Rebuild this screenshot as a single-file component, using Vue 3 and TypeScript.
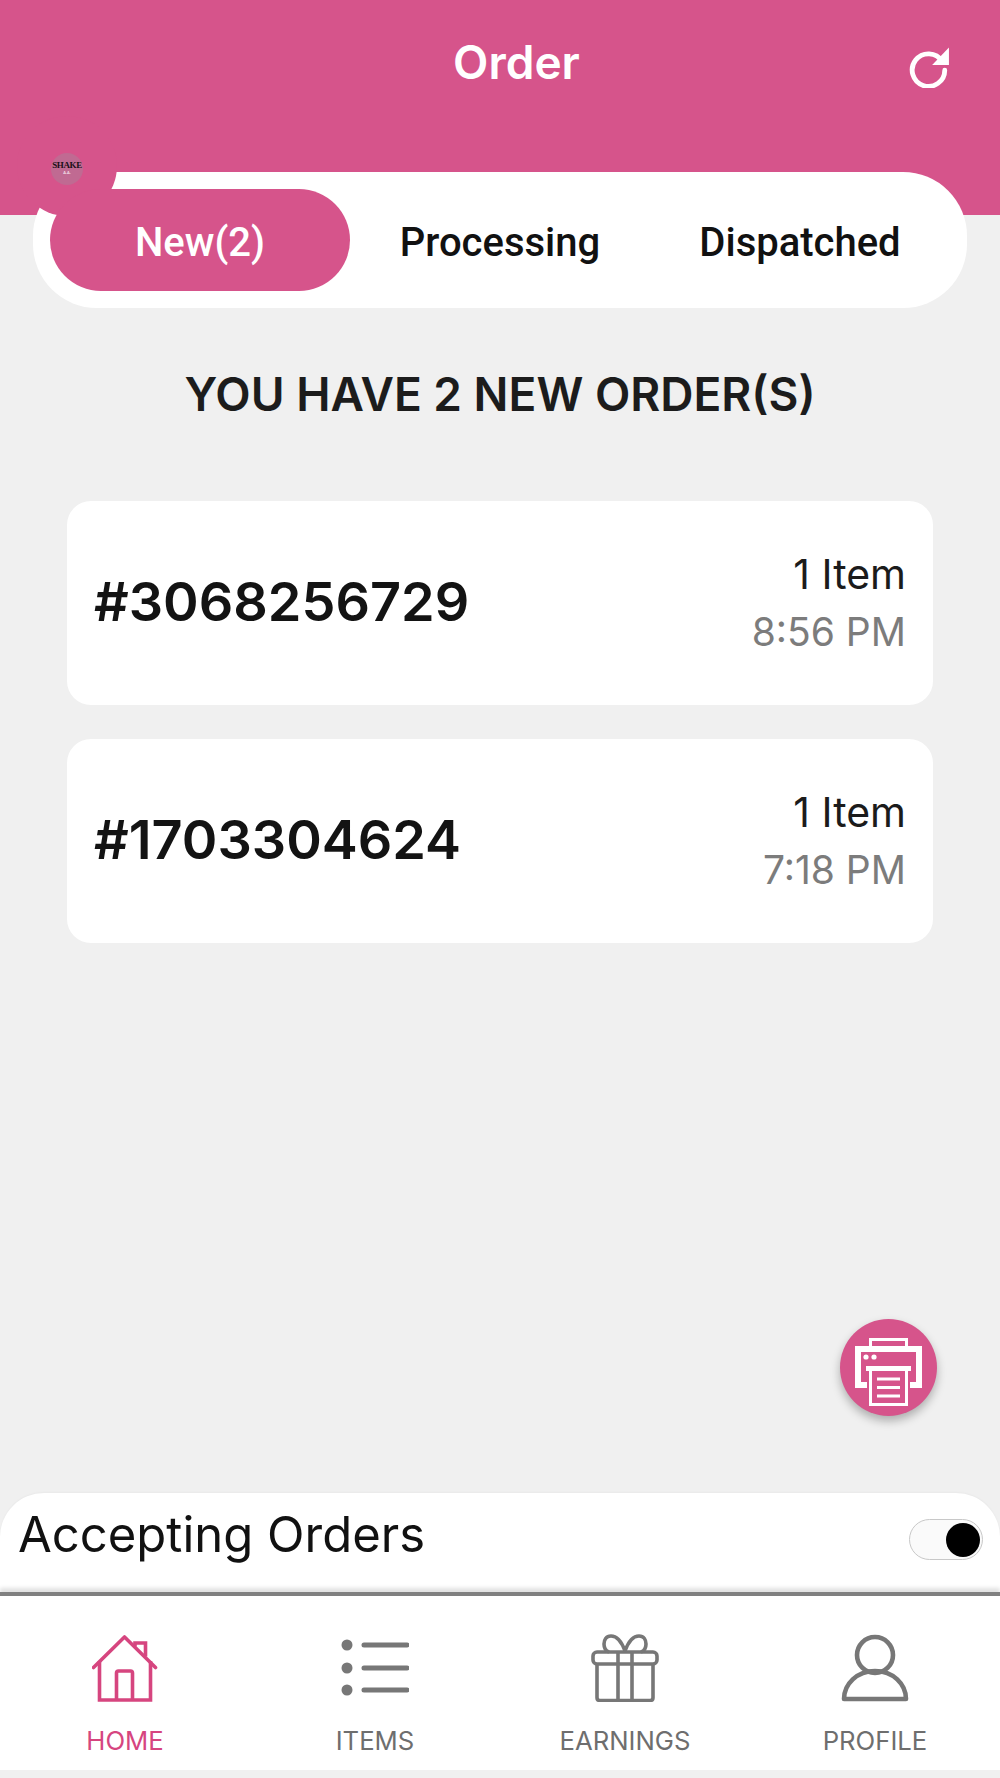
<script setup lang="ts">
const tabs = ['New(2)', 'Processing', 'Dispatched']
const orders = [
  { id: '#3068256729', items: '1 Item', time: '8:56 PM' },
  { id: '#1703304624', items: '1 Item', time: '7:18 PM' },
]
</script>

<template>
  <div class="page">
    <header class="header">
      <h1 class="title">Order</h1>
      <svg class="refresh" viewBox="0 0 40 40" fill="none">
        <path d="M32.5 14.5A15.5 15.5 0 1 0 35 23" stroke="#fff" stroke-width="4.6" stroke-linecap="round" />
        <path d="M39 1.500V18H23z" fill="#fff" />
      </svg>
    </header>

    <div class="tabs">
      <div class="blob">
        <div class="avatar">
          <span class="avatar-text">SHAKE</span>
          <span class="avatar-sub">A.A.</span>
        </div>
      </div>
      <div v-for="(tab, i) in tabs" :key="tab" class="tab" :class="{ active: i === 0 }">{{ tab }}</div>
    </div>

    <h2 class="summary">YOU HAVE 2 NEW ORDER(S)</h2>

    <main class="orders">
      <article v-for="o in orders" :key="o.id" class="card">
        <div class="order-id">{{ o.id }}</div>
        <div class="meta">
          <div class="items">{{ o.items }}</div>
          <div class="time">{{ o.time }}</div>
        </div>
      </article>
    </main>

    <div class="fab-row">
      <button class="fab" type="button" aria-label="Print">
        <svg viewBox="0 0 72 72" width="72" height="72" fill="none" stroke="#fff">
          <path d="M17.500 10V3.500h36V10" stroke-width="3" />
          <path d="M14 49H5V13h61v36H57" stroke-width="6" />
          <rect x="13" y="30" width="45" height="5" fill="#fff" stroke="none" />
          <path d="M17.500 33V68.500h36V33" stroke-width="3" />
          <path d="M24 43h23M24 51.500h23M24 60h23" stroke-width="3" />
          <circle cx="13" cy="21" r="2.600" fill="#fff" stroke="none" />
          <circle cx="21" cy="21" r="2.600" fill="#fff" stroke="none" />
        </svg>
      </button>
    </div>

    <section class="accepting">
      <span class="accepting-label">Accepting Orders</span>
      <span class="toggle"><span class="knob"></span></span>
    </section>

    <nav class="nav">
      <div class="nav-item active">
        <svg viewBox="0 0 66 68" width="66" height="68" fill="none" stroke="#d6457f" stroke-width="3.6">
          <path d="M1.500 33.500 32.500 3l31 30.500" stroke-linejoin="round" stroke-linecap="round" />
          <path d="M7.500 27v39h51V27" />
          <path d="M24.500 66V39q0-2 2-2h12q2 0 2 2V66" />
          <path d="M43 12.500V9h10.500v13.500" />
        </svg>
        <span>HOME</span>
      </div>
      <div class="nav-item">
        <svg viewBox="0 0 68 58" width="68" height="58" fill="none" stroke="#777" stroke-width="5" stroke-linecap="round">
          <path d="M23 6h43M23 29h43M23 51h43" />
          <circle cx="6" cy="6" r="5.500" fill="#777" stroke="none" />
          <circle cx="6" cy="29" r="5.500" fill="#777" stroke="none" />
          <circle cx="6" cy="51" r="5.500" fill="#777" stroke="none" />
        </svg>
        <span>ITEMS</span>
      </div>
      <div class="nav-item">
        <svg viewBox="0 0 68 68" width="68" height="68" fill="none" stroke="#777" stroke-width="3.6" stroke-linejoin="round">
          <rect x="2" y="18" width="64" height="12" rx="4" />
          <path d="M6 30v33.500q0 3 3 3h50q3 0 3-3V30" />
          <path d="M27 18v48.500M41 18v48.500" />
          <path d="M34 17C30 6 25 2 20 2c-5 0-7 4-7 8s2 7 5 8" />
          <path d="M34 17C38 6 43 2 48 2c5 0 7 4 7 8s-2 7-5 8" />
        </svg>
        <span>EARNINGS</span>
      </div>
      <div class="nav-item">
        <svg viewBox="0 0 68 68" width="68" height="68" fill="none" stroke="#777" stroke-width="4.6" stroke-linejoin="round">
          <circle cx="34" cy="21" r="18" />
          <path d="M3 65C3 50 16 37 34 37s31 13 31 28z" />
        </svg>
        <span>PROFILE</span>
      </div>
    </nav>
  </div>
</template>

<style>
html, body { margin: 0; background: #f0f0f0; }
</style>

<style scoped>
.page {
  height: 1778px;
  background: #f0f0f0;
  display: flex;
  flex-direction: column;
  font-family: Inter, "Liberation Sans", sans-serif;
  overflow: hidden;
}
.header {
  height: 215px;
  flex: none;
  background: #d6548b;
  display: flex;
  justify-content: center;
  position: relative;
}
.title {
  margin: 38px 0 0 33px;
  font-size: 46px;
  line-height: 48px;
  font-weight: 600;
  color: #fff;
}
.refresh {
  position: absolute;
  left: 908px;
  top: 46px;
  width: 42px;
  height: 42px;
}
.tabs {
  position: relative;
  flex: none;
  box-sizing: border-box;
  height: 136px;
  margin: -43px 33px 0;
  padding: 17px;
  background: #fff;
  border-radius: 64px;
  display: grid;
  grid-template-columns: 300px 1fr 1fr;
  align-items: stretch;
  font-family: Roboto, sans-serif;
}
.blob {
  position: absolute;
  left: -16px;
  top: -56px;
  width: 100px;
  height: 100px;
  border-radius: 50%;
  background: #d6548b;
  display: flex;
  align-items: center;
  justify-content: center;
}
.avatar {
  width: 32px;
  height: 32px;
  border-radius: 50%;
  background: #c06a92;
  display: flex;
  flex-direction: column;
  align-items: center;
  justify-content: center;
  overflow: hidden;
  margin-top: 6px;
}
.avatar-text {
  font-family: "Liberation Serif", serif;
  font-size: 9px;
  font-weight: 700;
  color: #1a0f16;
  line-height: 10px;
  margin-top: -2px;
  letter-spacing: -0.4px;
}
.avatar-sub {
  font-size: 4px;
  font-weight: 700;
  color: #f5e6ee;
  line-height: 6px;
}
.tab {
  position: relative;
  display: flex;
  align-items: center;
  justify-content: center;
  padding-top: 4px;
  font-size: 40px;
  font-weight: 500;
  color: #111;
}
.tab.active {
  background: #d6548b;
  color: #fff;
  border-radius: 52px;
}
.summary {
  flex: none;
  margin: 58px 0 0;
  text-align: center;
  font-size: 46px;
  line-height: 56px;
  font-weight: 600;
  color: #1c1c1c;
}
.orders {
  flex: none;
  margin: 79px 67px 0;
  display: flex;
  flex-direction: column;
  gap: 34px;
}
.card {
  height: 204px;
  box-sizing: border-box;
  padding: 0 27px;
  background: #fff;
  border-radius: 24px;
  display: flex;
  justify-content: space-between;
  align-items: center;
}
.order-id {
  font-size: 54px;
  font-weight: 600;
  color: #131313;
  padding-bottom: 4px;
}
.meta {
  text-align: right;
  line-height: 58px;
}
.items { color: #1b1b1b; font-size: 41px; }
.time { color: #7c7c7c; font-size: 39px; }
.fab-row {
  flex: 1;
  display: flex;
  justify-content: flex-end;
  align-items: flex-end;
  padding: 0 63px 77px 0;
}
.fab {
  width: 97px;
  height: 97px;
  padding: 9px 0 0;
  border: 0;
  border-radius: 50%;
  background: #d6548b;
  box-shadow: 0 5px 10px rgba(0, 0, 0, 0.28);
  display: flex;
  align-items: center;
  justify-content: center;
  overflow: hidden;
}
.accepting {
  flex: none;
  box-sizing: border-box;
  height: 99px;
  padding: 0 17px 17px 18px;
  background: #fff;
  border-radius: 44px 44px 0 0;
  box-shadow: 0 -1px 2px rgba(0, 0, 0, 0.03);
  display: flex;
  justify-content: space-between;
  align-items: center;
}
.accepting-label {
  font-size: 49px;
  color: #111;
}
.toggle {
  box-sizing: border-box;
  width: 74px;
  height: 41px;
  margin-top: 11px;
  border: 1.5px solid #c8c8c8;
  border-radius: 21px;
  background: #fafafa;
  display: flex;
  justify-content: flex-end;
  align-items: center;
  padding-right: 2px;
}
.knob {
  width: 34px;
  height: 34px;
  border-radius: 50%;
  background: #000;
}
.nav {
  flex: none;
  height: 178px;
  margin-bottom: 8px;
  box-sizing: border-box;
  background: #fff;
  border-top: 4px solid #808080;
  box-shadow: 0 -4px 4px rgba(0, 0, 0, 0.12);
  display: grid;
  grid-template-columns: repeat(4, 1fr);
  position: relative;
}
.nav-item {
  height: 174px;
  box-sizing: border-box;
  padding-top: 38px;
  position: relative;
  display: flex;
  flex-direction: column;
  align-items: center;
  font-size: 25.7px;
  color: #6e6e6e;
}
.nav-item svg { flex: none; height: 68px; }
.nav-item span {
  position: absolute;
  top: 129px;
  line-height: 32px;
}
.nav-item.active { color: #d6457f; }
</style>
